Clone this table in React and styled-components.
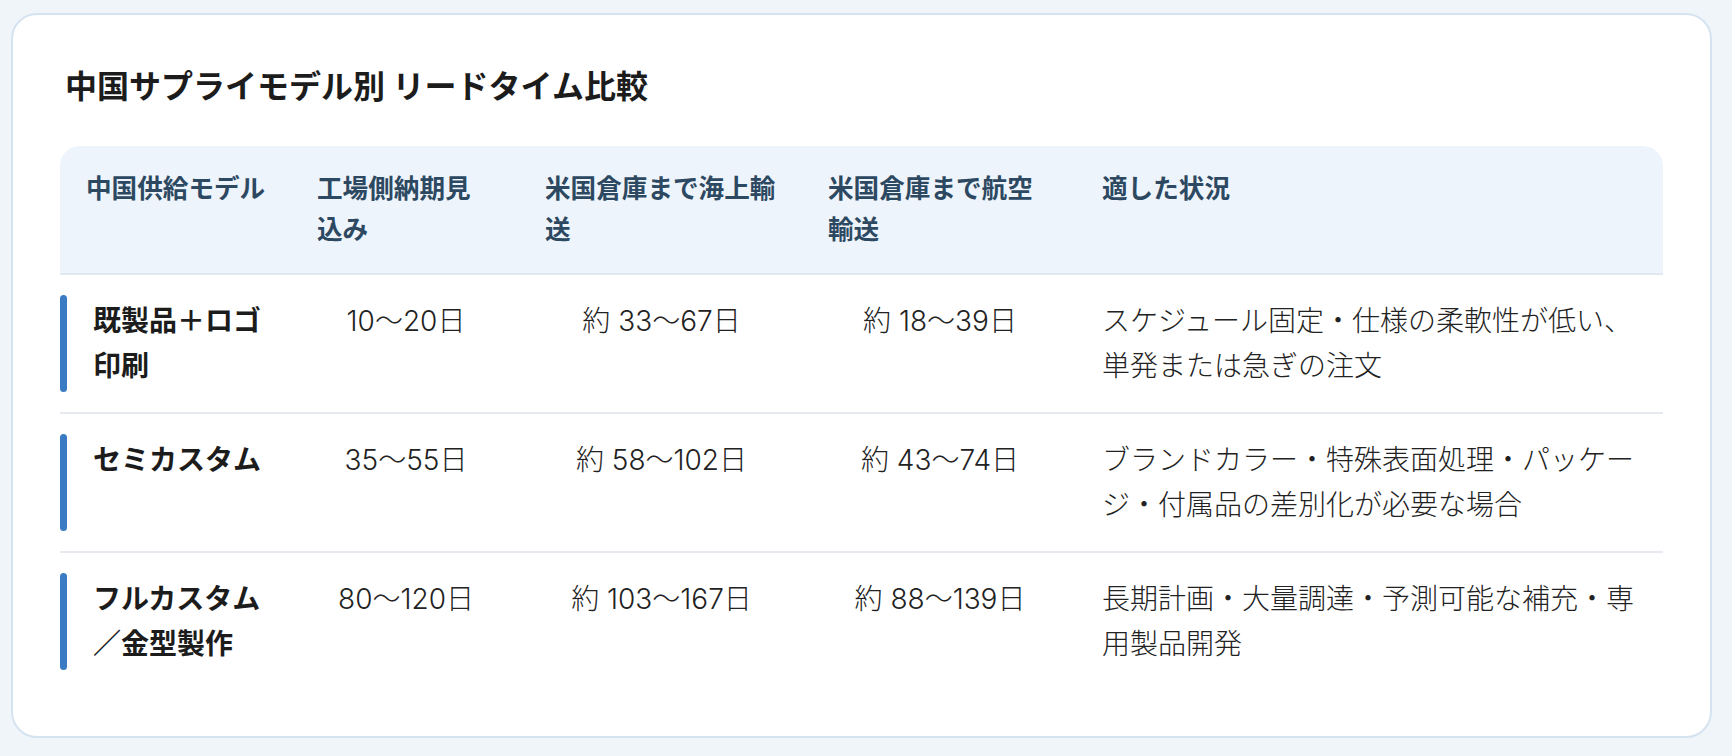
import React from "react";
import styled, { createGlobalStyle } from "styled-components";

const GlobalStyle = createGlobalStyle`
  html, body {
    margin: 0;
    padding: 0;
    background: #f0f5fa;
  }
  body {
    font-family: Inter, "Noto Sans CJK JP", "Noto Sans", sans-serif;
    color: #222;
  }
`;

const COLUMNS = "231px 228px 283px 274px 1fr";

const rows = [
  {
    model: "既製品＋ロゴ印刷",
    factory: "10〜20日",
    sea: "約 33〜67日",
    air: "約 18〜39日",
    fit: "スケジュール固定・仕様の柔軟性が低い、単発または急ぎの注文"
  },
  {
    model: "セミカスタム",
    factory: "35〜55日",
    sea: "約 58〜102日",
    air: "約 43〜74日",
    fit: "ブランドカラー・特殊表面処理・パッケージ・付属品の差別化が必要な場合"
  },
  {
    model: "フルカスタム／金型製作",
    factory: "80〜120日",
    sea: "約 103〜167日",
    air: "約 88〜139日",
    fit: "長期計画・大量調達・予測可能な補充・専用製品開発"
  }
];

const headers = [
  "中国供給モデル",
  "工場側納期見込み",
  "米国倉庫まで海上輸送",
  "米国倉庫まで航空輸送",
  "適した状況"
];

const S = {
  Page: styled.div`
    padding: 13px 20px 20px 11px;
  `,
  Card: styled.section`
    background: #fff;
    border: 2px solid #d5e3f0;
    border-radius: 26px;
    padding: 49px 47px 44px 47px;
  `,
  Title: styled.h2`
    margin: 0 0 37px;
    padding-left: 5px;
    font-size: 32px;
    line-height: 45px;
    font-weight: 700;
    color: #1c1c1c;
  `,
  Table: styled.div`
    display: flex;
    flex-direction: column;
  `,
  HeadRow: styled.div`
    display: grid;
    grid-template-columns: ${COLUMNS};
    background: #eef4fb;
    border-radius: 20px 20px 0 0;
    border-bottom: 2px solid #e2e8ef;
  `,
  HeadCell: styled.div`
    padding: 22px 24px 23px 26px;
    font-size: 25.6px;
    line-height: 41px;
    font-weight: 700;
    color: #2d4962;
  `,
  Row: styled.div`
    display: grid;
    grid-template-columns: ${COLUMNS};
    border-bottom: 2px solid ${p => (p.$last ? "transparent" : "#e6eaf0")};
  `,
  ModelCell: styled.div`
    display: flex;
    align-items: stretch;
    padding: 20px 0;
  `,
  Bar: styled.span`
    flex: none;
    width: 7px;
    border-radius: 4px;
    background: #3b7bc4;
  `,
  ModelName: styled.div`
    padding: 3.5px 24px 3.5px 26px;
    font-size: 28px;
    line-height: 45px;
    font-weight: 700;
    color: #1c1c1c;
  `,
  Cell: styled.div`
    padding: 23.5px 24px 23.5px 26px;
    font-size: 28px;
    line-height: 45px;
    font-weight: 300;
    color: #222;
    text-align: ${p => (p.$center ? "center" : "left")};
  `
};

export default function App() {
  return (
    <S.Page>
      <GlobalStyle />
      <S.Card>
        <S.Title>中国サプライモデル別 リードタイム比較</S.Title>
        <S.Table>
          <S.HeadRow>
            {headers.map(h => (
              <S.HeadCell key={h}>{h}</S.HeadCell>
            ))}
          </S.HeadRow>
          {rows.map((r, i) => (
            <S.Row key={r.model} $last={i === rows.length - 1}>
              <S.ModelCell>
                <S.Bar />
                <S.ModelName>{r.model}</S.ModelName>
              </S.ModelCell>
              <S.Cell $center>{r.factory}</S.Cell>
              <S.Cell $center>{r.sea}</S.Cell>
              <S.Cell $center>{r.air}</S.Cell>
              <S.Cell>{r.fit}</S.Cell>
            </S.Row>
          ))}
        </S.Table>
      </S.Card>
    </S.Page>
  );
}
